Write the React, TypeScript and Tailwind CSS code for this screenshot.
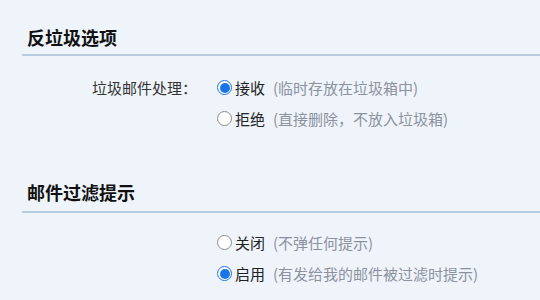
import React from "react";

function Radio({ checked }: { checked: boolean }) {
  return checked ? (
    <span className="inline-flex items-center justify-center w-[15px] h-[15px] rounded-full border border-[#1a73e8] bg-white mr-[3px] shrink-0">
      <span className="w-[10px] h-[10px] rounded-full bg-[#1a73e8]" />
    </span>
  ) : (
    <span className="inline-block w-[15px] h-[15px] rounded-full border border-[#8a8a8a] bg-white mr-[3px] shrink-0" />
  );
}

function Option({ checked, label, hint }: { checked: boolean; label: string; hint: string }) {
  return (
    <div className="flex items-center h-[31px]">
      <Radio checked={checked} />
      <span className="text-[#222]">{label}</span>
      <span className="text-[#8b929e] ml-[8px]">{hint}</span>
    </div>
  );
}

export default function App() {
  return (
    <div className="w-[540px] h-[300px] overflow-hidden bg-[#eff4fb] font-['Noto_Sans_CJK_SC','Microsoft_YaHei',sans-serif] text-[15px] leading-[31px]">
      <div className="pl-[22px]">
        <div className="pt-[26px] pb-[6px] pl-[5px] border-b-2 border-[#b6cae0] text-[18px] leading-[22px] font-bold text-[#111]">
          反垃圾选项
        </div>
        <div className="flex mt-[16px]">
          <div className="w-[176px] pr-[1px] text-right text-[#333] h-[31px]">垃圾邮件处理：</div>
          <div className="ml-[19px] flex flex-col">
            <Option checked label="接收" hint="(临时存放在垃圾箱中)" />
            <Option checked={false} label="拒绝" hint="(直接删除，不放入垃圾箱)" />
          </div>
        </div>
        <div className="mt-[47px] pb-[8px] pl-[5px] border-b-2 border-[#b6cae0] text-[18px] leading-[22px] font-bold text-[#111]">
          邮件过滤提示
        </div>
        <div className="flex mt-[14px]">
          <div className="w-[176px]" />
          <div className="ml-[19px] flex flex-col">
            <Option checked={false} label="关闭" hint="(不弹任何提示)" />
            <Option checked label="启用" hint="(有发给我的邮件被过滤时提示)" />
          </div>
        </div>
      </div>
    </div>
  );
}
